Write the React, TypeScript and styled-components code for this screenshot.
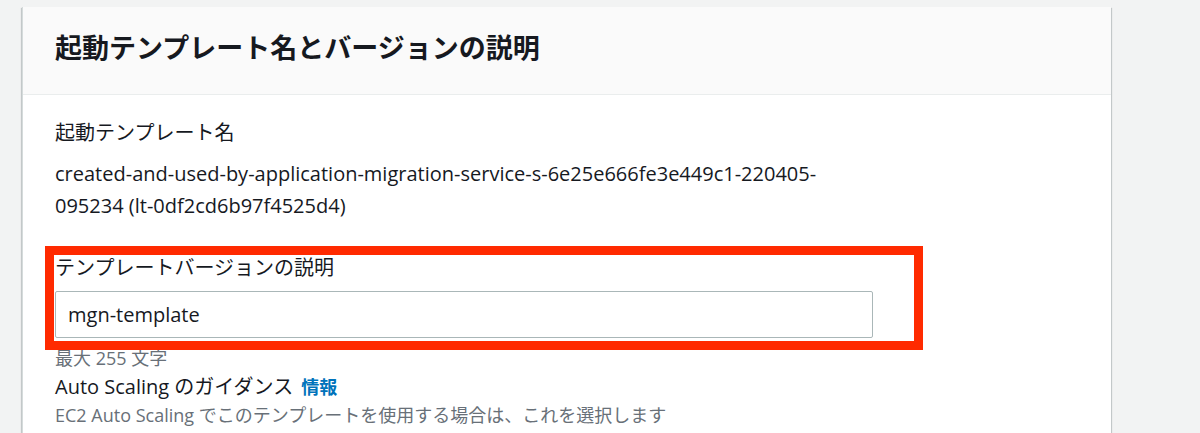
import React from "react";
import styled, { createGlobalStyle } from "styled-components";

const GlobalStyle = createGlobalStyle`
  html, body {
    margin: 0;
    padding: 0;
    background: #f2f3f3;
    font-family: "Open Sans", "Noto Sans CJK JP", sans-serif;
    color: #16191f;
  }
`;

const Page = styled.div`
  box-sizing: border-box;
  padding: 7px 0 0 22px;
  height: 433px;
  overflow: hidden;
`;

const Card = styled.section`
  width: 1088px;
  min-height: 460px;
  background: #ffffff;
  border-left: 1px solid #d5dbdb;
  box-shadow: 0 1px 1px 0 rgba(0, 28, 36, 0.3), 1px 1px 1px 0 rgba(0, 28, 36, 0.15),
    -1px 1px 1px 0 rgba(0, 28, 36, 0.15);
`;

const Header = styled.header`
  background: #fafafa;
  border-bottom: 1px solid #eaeded;
  height: 88px;
  padding: 0 32px 6px;
  display: flex;
  align-items: center;
  box-sizing: border-box;
`;

const Title = styled.h2`
  margin: 0;
  font-size: 27px;
  line-height: 36px;
  font-weight: 700;
  color: #16191f;
`;

const Body = styled.div`
  padding: 24px 32px 0;
  display: flex;
  flex-direction: column;
`;

const Label = styled.div`
  font-size: 20px;
  line-height: 28px;
  color: #16191f;
`;

const Value = styled.div`
  margin-top: 11px;
  max-width: 800px;
  font-size: 20px;
  line-height: 32px;
  color: #16191f;
`;

const Field = styled.div`
  position: relative;
  margin-top: 32px;
  width: 818px;
  display: flex;
  flex-direction: column;
  gap: 9px;
`;

const Input = styled.input`
  box-sizing: border-box;
  width: 100%;
  height: 47px;
  border: 1px solid #aab7b8;
  border-radius: 2px;
  padding: 0 12px;
  font-family: "Open Sans", "Noto Sans CJK JP", sans-serif;
  font-size: 20px;
  color: #16191f;
  background: #ffffff;
  outline: none;
`;

const Highlight = styled.div`
  position: absolute;
  left: -10px;
  top: -8px;
  width: 878px;
  height: 104px;
  box-sizing: border-box;
  border: 9px solid #ff2a00;
  pointer-events: none;
`;

const Constraint = styled.div`
  margin-top: 9px;
  font-size: 18px;
  line-height: 22px;
  color: #687078;
`;

const SubLabel = styled.div`
  margin-top: 4px;
  font-size: 20px;
  line-height: 28px;
  color: #16191f;
  display: flex;
  align-items: baseline;
  gap: 8px;
`;

const InfoLink = styled.a`
  font-size: 18px;
  font-weight: 700;
  color: #0073bb;
  text-decoration: none;
`;

const Description = styled.div`
  margin-top: 2px;
  font-size: 18px;
  line-height: 24px;
  color: #687078;
`;

export default function App() {
  return (
    <>
      <GlobalStyle />
      <Page>
        <Card>
          <Header>
            <Title>起動テンプレート名とバージョンの説明</Title>
          </Header>
          <Body>
            <Label>起動テンプレート名</Label>
            <Value>
              created-and-used-by-application-migration-service-s-6e25e666fe3e449c1-220405-095234
              (lt-0df2cd6b97f4525d4)
            </Value>
            <Field>
              <Label>テンプレートバージョンの説明</Label>
              <Input defaultValue="mgn-template" />
              <Highlight />
            </Field>
            <Constraint>最大 255 文字</Constraint>
            <SubLabel>
              <span>Auto Scaling のガイダンス</span>
              <InfoLink href="#">情報</InfoLink>
            </SubLabel>
            <Description>
              EC2 Auto Scaling でこのテンプレートを使用する場合は、これを選択します
            </Description>
          </Body>
        </Card>
      </Page>
    </>
  );
}
